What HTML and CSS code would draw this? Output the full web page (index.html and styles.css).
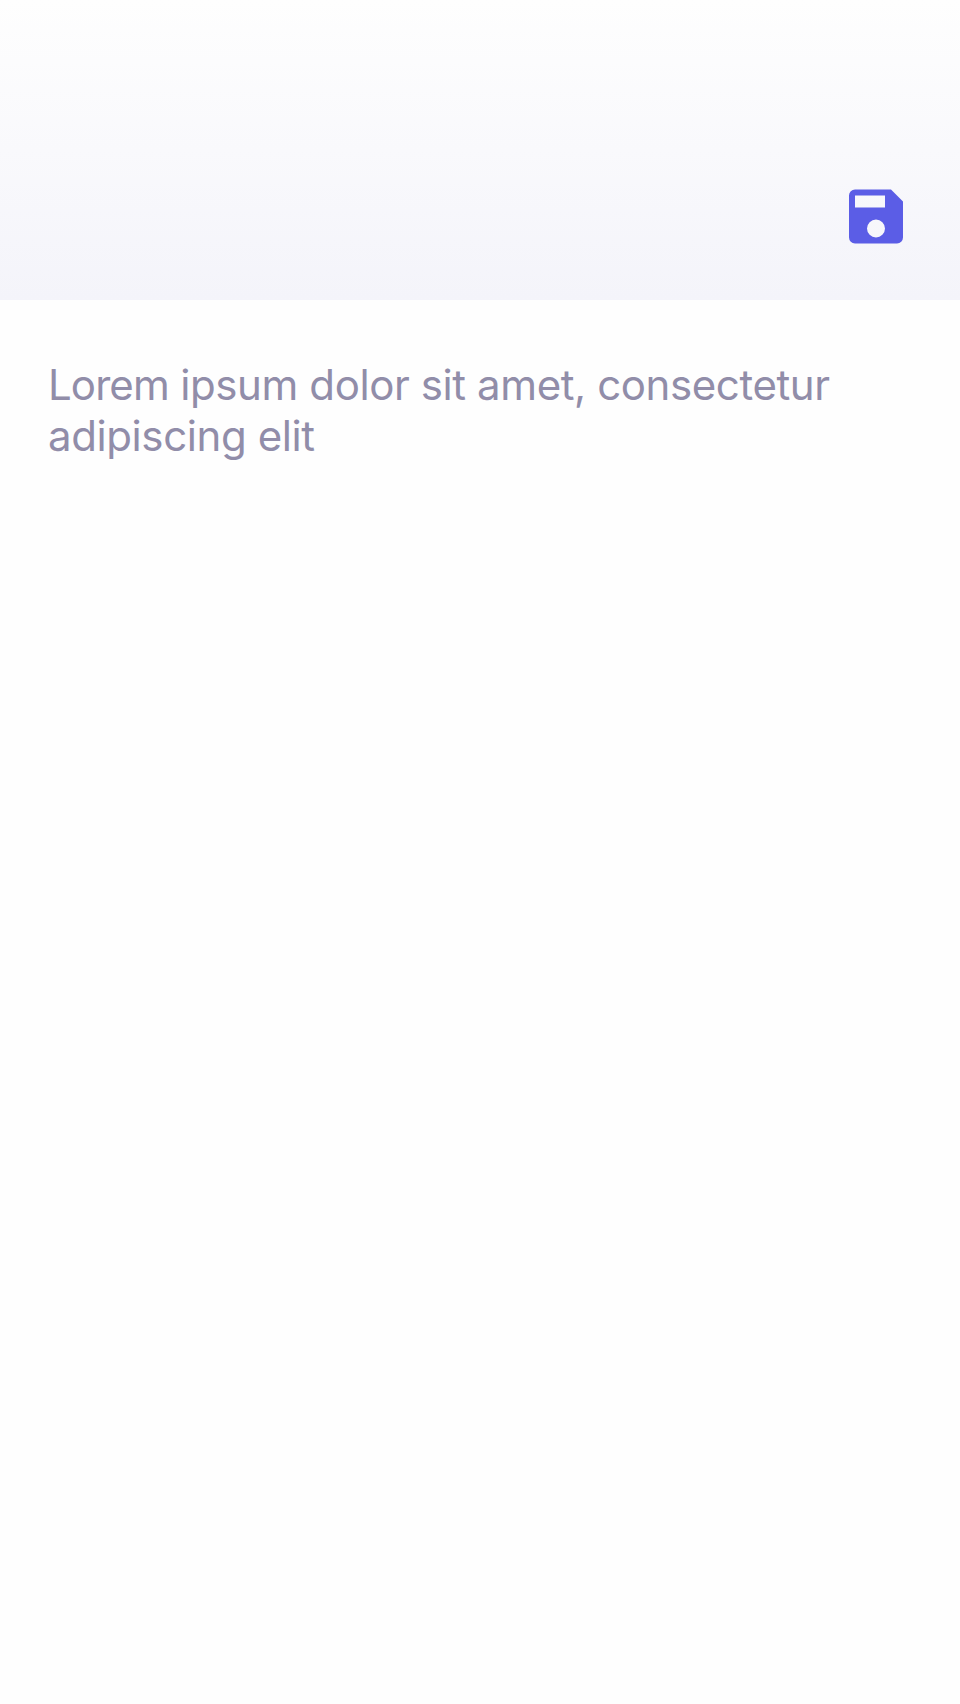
FILE: index.html
```html
<!DOCTYPE html>
<html lang="en">
<head>
<meta charset="utf-8">
<title>Note</title>
<link rel="stylesheet" href="styles.css">
</head>
<body>
<header class="toolbar">
<button class="save" aria-label="Save">
<svg class="save-icon" viewBox="3 2.83 18 18.34"><path fill-rule="evenodd" d="M17 3H5a2 2 0 0 0-2 2v14a2 2 0 0 0 2 2h14a2 2 0 0 0 2-2V7l-4-4zm-5 16a3 3 0 1 1 0-6 3 3 0 0 1 0 6zm3-10H5V5h10v4z"/></svg>
</button>
</header>
<main class="note">
<p class="text"><span class="lead">Lorem</span> ipsum dolor sit amet, consectetur<br>adipiscing elit</p>
</main>
</body>
</html>
```
FILE: styles.css
```css
body { margin: 0; min-height: 1704px; background: #fefefe; font-family: Inter, "Liberation Sans", sans-serif; }
.toolbar { box-sizing: border-box; height: 300px; padding: 189px 57px 0 0; display: flex; justify-content: flex-end; align-items: flex-start; background: linear-gradient(#fefefe, #f4f4fa); }
.save { display: block; padding: 0; border: 0; background: none; }
.save-icon { display: block; width: 54px; height: 55px; fill: #5b5de6; }
.note { padding: 59px 48px; }
.text { margin: 0; font-size: 42px; font-weight: 380; line-height: 51px; letter-spacing: -0.4px; color: #918da9; white-space: nowrap; }
.lead { letter-spacing: -0.9px; }
```
